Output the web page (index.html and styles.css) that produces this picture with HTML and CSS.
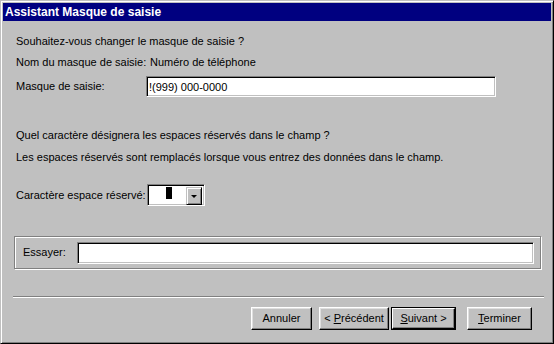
FILE: index.html
```html
<!DOCTYPE html>
<html lang="fr">

<head>
    <meta charset="UTF-8">
    <title>Assistant Masque de saisie</title>
    <link rel="stylesheet" href="styles.css">
</head>

<body>
    <!-- Dialog window -->
    <div class="window">
        <div class="titlebar">Assistant Masque de saisie</div>

        <div class="content">
            <p class="line q1">Souhaitez-vous changer le masque de saisie ?</p>

            <div class="row name-row">
                <span class="label">Nom du masque de saisie:</span>
                <span class="value">Numéro de téléphone</span>
            </div>

            <div class="row mask-row">
                <span class="label">Masque de saisie:</span>
                <div class="field mask-field">!(999) 000-0000</div>
            </div>

            <p class="line q2">Quel caractère désignera les espaces réservés dans le champ ?</p>
            <p class="line q3">Les espaces réservés sont remplacés lorsque vous entrez des données dans le champ.</p>

            <div class="row char-row">
                <span class="label">Caractère espace réservé:</span>
                <div class="combo">
                    <div class="combo-value"><span class="cursor-char"></span></div>
                    <div class="combo-btn"><span class="arrow"></span></div>
                </div>
            </div>

            <!-- Try it box -->
            <div class="groupbox">
                <span class="try-label">Essayer:</span>
                <div class="field try-field"></div>
            </div>

            <div class="separator"></div>

            <div class="buttons">
                <button class="btn btn-cancel">Annuler</button>
                <button class="btn btn-prev">&lt; <u>P</u>récédent</button>
                <button class="btn btn-next default">
                    <span><u>S</u>uivant &gt;</span>
                </button>
                <button class="btn btn-finish"><u>T</u>erminer</button>
            </div>
        </div>
    </div>
</body>

</html>
```

FILE: styles.css
```css
* {
    box-sizing: border-box;
    margin: 0;
    padding: 0;
}

body {
    font-family: "Liberation Sans", Arial, sans-serif;
    font-size: 11px;
    line-height: 13px;
    color: #000;
    background-color: #c0c0c0;
}

/* Window frame */
.window {
    width: 554px;
    height: 344px;
    background-color: #c0c0c0;
    border: 1px solid;
    border-color: #c0c0c0 #000 #000 #c0c0c0;
    box-shadow: inset 1px 1px #fff, inset -1px -1px #808080;
    padding: 2px;
}

.titlebar {
    height: 18px;
    background-color: #000080;
    color: #fff;
    font-size: 12px;
    font-weight: bold;
    line-height: 18px;
    padding-left: 2px;
}

.content {
    padding: 0 9px 0 11px;
}

.line {
    margin-left: 2px;
    height: 13px;
    white-space: nowrap;
}

.q1 {
    margin-top: 14px;
}

.q2 {
    margin-top: 32px;
}

.q3 {
    margin-top: 9px;
}

.row {
    display: flex;
    align-items: center;
    margin-left: 2px;
}

.row .label {
    width: 131px;
    flex-shrink: 0;
}

.name-row {
    height: 13px;
    margin-top: 8px;
}

.name-row .value {
    margin-left: 3px;
}

.mask-row {
    height: 21px;
    margin-top: 7px;
}

.char-row {
    height: 22px;
    margin-top: 20px;
}

/* Sunken edit fields */
.field {
    background-color: #fff;
    border: 1px solid;
    border-color: #808080 #fff #fff #808080;
    box-shadow: inset 1px 1px #000, inset -1px -1px #c0c0c0;
}

.mask-field {
    width: 350px;
    height: 21px;
    margin-left: -1px;
    padding: 4px 0 0 2px;
}

/* Combo box */
.combo {
    display: flex;
    width: 58px;
    height: 22px;
    border: 1px solid;
    border-color: #808080 #fff #fff #808080;
    box-shadow: inset 1px 1px #000, inset -1px -1px #c0c0c0;
    padding: 2px;
    background-color: #fff;
}

.combo-value {
    flex: 1;
    position: relative;
}

.cursor-char {
    position: absolute;
    left: 16px;
    top: 0;
    width: 6px;
    height: 12px;
    background-color: #000;
}

.combo-btn {
    width: 16px;
    height: 18px;
    background-color: #c0c0c0;
    border: 1px solid;
    border-color: #c0c0c0 #000 #000 #c0c0c0;
    box-shadow: inset 1px 1px #fff, inset -1px -1px #808080;
    display: flex;
    align-items: center;
    justify-content: center;
}

.arrow {
    width: 0;
    height: 0;
    border-left: 3px solid transparent;
    border-right: 3px solid transparent;
    border-top: 3px solid #000;
    margin-top: 1px;
}

/* Etched group box */
.groupbox {
    display: flex;
    align-items: center;
    width: 527px;
    height: 33px;
    margin-top: 30px;
    border: 1px solid #808080;
    box-shadow: inset 1px 1px #fff, 1px 1px #fff;
    padding: 0 6px 0 8px;
}

.try-label {
    width: 54px;
    flex-shrink: 0;
}

.try-field {
    flex: 1;
    height: 22px;
}

.separator {
    margin: 27px 0 0 -1px;
    width: 531px;
    height: 2px;
    border-top: 1px solid #808080;
    border-bottom: 1px solid #fff;
}

/* Wizard buttons */
.buttons {
    display: flex;
    justify-content: flex-end;
    margin-top: 9px;
    padding-right: 10px;
}

.btn {
    font-family: inherit;
    font-size: 11px;
    line-height: 13px;
    color: #000;
    height: 23px;
    background-color: #c0c0c0;
    border: 1px solid;
    border-color: #fff #000 #000 #fff;
    box-shadow: inset -1px -1px #808080, inset 1px 1px #dfdfdf;
    padding: 0;
}

.btn u {
    text-decoration: underline;
}

.btn-cancel {
    width: 61px;
}

.btn-prev {
    width: 70px;
    margin-left: 7px;
}

.btn-next {
    width: 65px;
    margin-left: 2px;
}

.btn-finish {
    width: 65px;
    margin-left: 11px;
}

/* Default button has an extra black frame */
.btn.default {
    border: 1px solid #000;
    box-shadow: none;
    padding: 0;
}

.btn.default span {
    display: flex;
    align-items: center;
    justify-content: center;
    height: 100%;
    border: 1px solid;
    border-color: #fff #000 #000 #fff;
    box-shadow: inset -1px -1px #808080;
}
```
